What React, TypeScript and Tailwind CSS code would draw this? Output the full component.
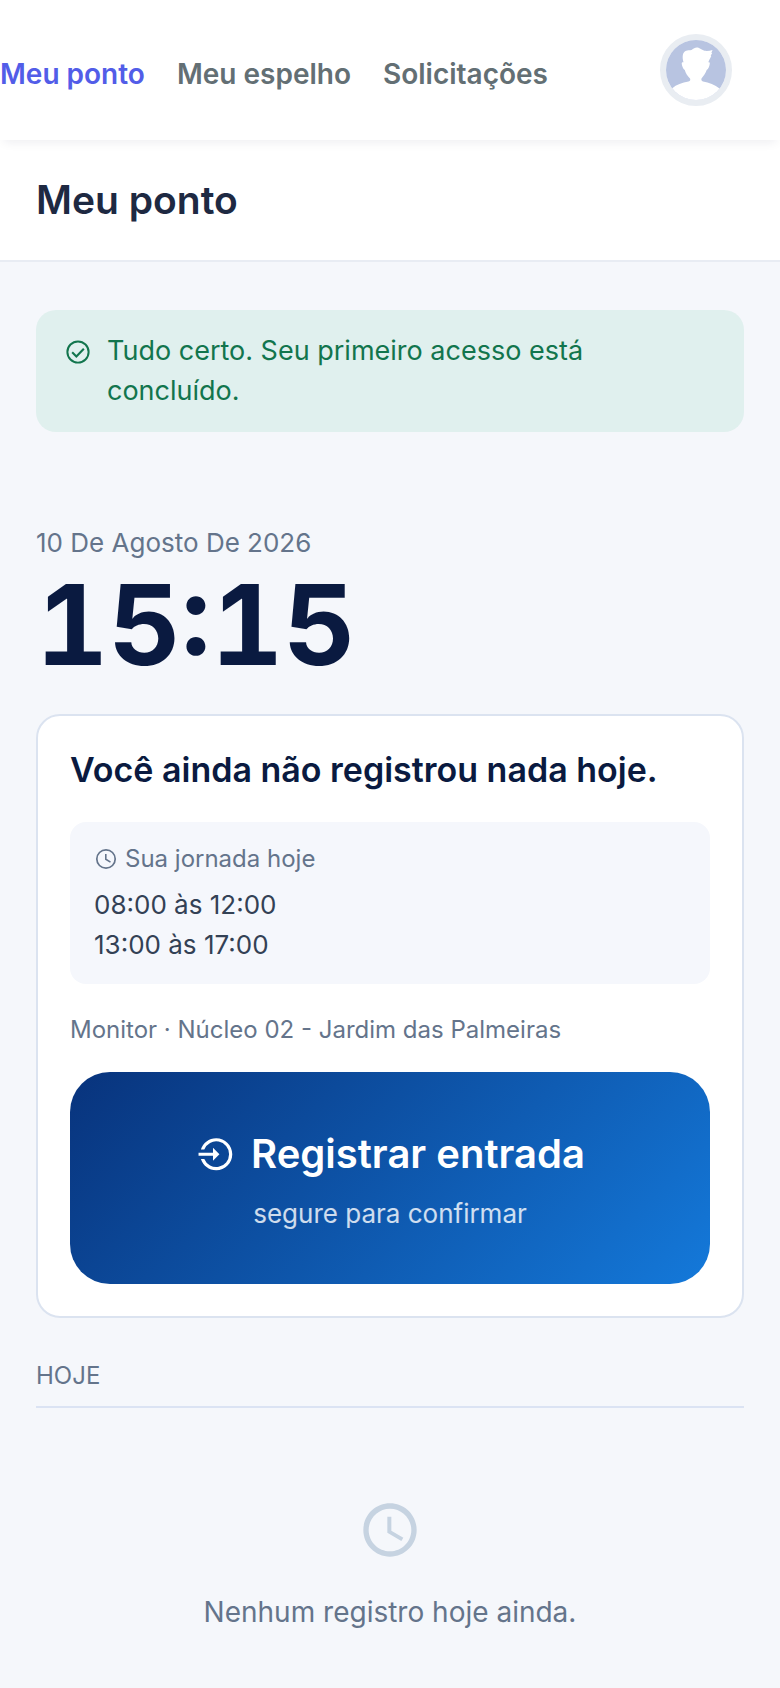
interface IconProps {
  className?: string;
}

const NAV_ITEMS = [
  { label: "Meu ponto", href: "#ponto", active: true },
  { label: "Meu espelho", href: "#espelho", active: false },
  { label: "Solicitações", href: "#solicitacoes", active: false },
];

const SHIFTS = ["08:00 às 12:00", "13:00 às 17:00"];

function CheckCircleIcon({ className }: IconProps) {
  return (
    <svg viewBox="0 0 24 24" className={className} fill="none" aria-hidden="true">
      <circle cx="12" cy="12" r="9.1" stroke="currentColor" strokeWidth="1.7" />
      <path d="M7 12.3l3.6 3.6 6.4-6.7" stroke="currentColor" strokeWidth="1.8" />
    </svg>
  );
}

function ClockIcon({ className }: IconProps) {
  return (
    <svg viewBox="0 0 24 24" className={className} fill="currentColor" aria-hidden="true">
      <path d="M11.99 2C6.47 2 2 6.48 2 12s4.47 10 9.99 10C17.52 22 22 17.52 22 12S17.52 2 11.99 2zM12 20c-4.42 0-8-3.58-8-8s3.58-8 8-8 8 3.58 8 8-3.58 8-8 8zm.5-13H11v6l5.25 3.15.75-1.23-4.5-2.67z" />
    </svg>
  );
}

// Thinner stroke than ClockIcon, for use beside text
function ClockThinIcon({ className }: IconProps) {
  return (
    <svg viewBox="0 0 24 24" className={className} fill="none" aria-hidden="true">
      <circle cx="12" cy="12" r="9.2" stroke="currentColor" strokeWidth="1.7" />
      <path d="M11.8 7v5.3l4.7 2.8" stroke="currentColor" strokeWidth="1.6" />
    </svg>
  );
}

function LoginCircleIcon({ className }: IconProps) {
  return (
    <svg viewBox="-1.2 -0.6 24.9 24.9" className={className} fill="currentColor" aria-hidden="true">
      <path d="M10 11V8l4 4-4 4v-3H1v-2h9zM2.458 15h2.124A8.003 8.003 0 0 0 20 12 8 8 0 0 0 4.582 9H2.458C3.732 4.943 7.522 2 12 2c5.523 0 10 4.477 10 10s-4.477 10-10 10c-4.478 0-8.268-2.943-9.542-7z" />
    </svg>
  );
}

function Avatar() {
  return (
    <svg viewBox="0 0 60 60" className="size-full" aria-hidden="true">
      <rect width="60" height="60" fill="#b8c4e1" />
      <path
        d="M6 48.5C10.500 44.500 16 42.500 22.500 41.500C24.500 41 24.500 39.500 24 38.500C21.500 36 19.500 33 18.800 30C17 29 16 26 15.700 23.500C15.700 22.500 16.500 22 17.500 22.300C16 17 16.500 12.500 19.500 11C21.500 10 24 10.500 25.500 10C28 8 30 7 32.500 7.800C34.500 8.500 36 10 38.500 10.800C41 11.200 44 10.800 46.500 10C46 11.500 45.700 12 45.300 12.800L46.200 13C45.800 14 45.300 14.800 44.700 15.500L45.300 16C44.500 18 43 20 42.300 22.300C43.500 22 44 22.700 43.800 23.800C43.300 26.500 42.500 29 40.700 30C39.700 33 37.500 36 35.500 38.500C35 39.500 35.500 41 37 41.500C43 42.500 49 45 53.500 48.500L60 60H0Z"
        fill="#fff"
      />
    </svg>
  );
}

function Header() {
  return (
    <header className="relative z-10 flex items-start justify-between bg-white py-[34px] pr-12 shadow-[0_6px_10px_-4px_rgba(30,30,70,0.08)]">
      <nav className="flex gap-8 pt-5 text-[28px]/10 font-semibold">
        {NAV_ITEMS.map((item) => (
          <a
            key={item.label}
            href={item.href}
            className={item.active ? "text-[#525de8]" : "text-[#636f74]"}
          >
            {item.label}
          </a>
        ))}
      </nav>
      <button
        type="button"
        aria-label="Perfil"
        className="size-[72px] shrink-0 overflow-hidden rounded-full border-6 border-[#e9edf2]"
      >
        <Avatar />
      </button>
    </header>
  );
}

function PunchCard() {
  return (
    <section className="mt-7 rounded-3xl border-2 border-[#dbe3f0] bg-white p-8">
      <h2 className="text-[34px]/11 font-semibold text-[#0a1a40]">
        Você ainda não registrou nada hoje.
      </h2>

      <div className="mt-[30px] rounded-2xl bg-[#f5f7fc] px-6 pt-5 pb-[19px]">
        <div className="flex items-center gap-[7px] text-2xl/[34px] text-[#64748b]">
          <ClockThinIcon className="size-6" />
          Sua jornada hoje
        </div>
        <ul className="mt-[9px] text-[26px]/10 text-[#334155]">
          {SHIFTS.map((shift) => (
            <li key={shift}>{shift}</li>
          ))}
        </ul>
      </div>

      <p className="mt-7 text-2xl/9 text-[#64748b]">
        Monitor · Núcleo 02 - Jardim das Palmeiras
      </p>

      <button
        type="button"
        className="mt-6 flex w-full flex-col items-center rounded-[40px] bg-linear-[135deg,#08337c,#1479da] pt-14 pb-[50px] text-white"
      >
        <span className="flex items-center gap-4 text-[40px]/13 font-semibold">
          <LoginCircleIcon className="size-10" />
          Registrar entrada
        </span>
        <span className="mt-[14px] text-[26px]/10 text-white/80">segure para confirmar</span>
      </button>
    </section>
  );
}

export default function App() {
  return (
    <div className="min-h-screen bg-[#f5f7fb] font-[Inter,sans-serif]">
      <Header />

      <div className="border-b-2 border-[#e8ecf3] bg-white px-9 py-9">
        <h1 className="text-[39px]/12 font-semibold text-[#1e2942]">Meu ponto</h1>
      </div>

      <main className="px-9 pt-12 pb-10">
        <div
          role="status"
          className="flex gap-[15px] rounded-[20px] bg-[#e0f0ee] px-7 py-[21px] text-[#12754d]"
        >
          <CheckCircleIcon className="mt-[7px] size-7 shrink-0" />
          <p className="text-[27px]/10">Tudo certo. Seu primeiro acesso está concluído.</p>
        </div>

        <p className="mt-[91px] text-[26px]/10 text-[#64748b]">10 De Agosto De 2026</p>
        <p className="text-[112px]/[123px] font-bold text-[#0a1a40] tabular-nums">15:15</p>

        <PunchCard />

        <section>
          <h2 className="mt-10 border-b-2 border-[#dbe3f3] pb-3 text-2xl/9 text-[#64748b]">
            HOJE
          </h2>
          <div className="flex flex-col items-center pt-[90px]">
            <ClockIcon className="size-16 text-[#c6d3e1]" />
            <p className="mt-[30px] text-[28px]/10 text-[#64748b]">Nenhum registro hoje ainda.</p>
          </div>
        </section>
      </main>
    </div>
  );
}
